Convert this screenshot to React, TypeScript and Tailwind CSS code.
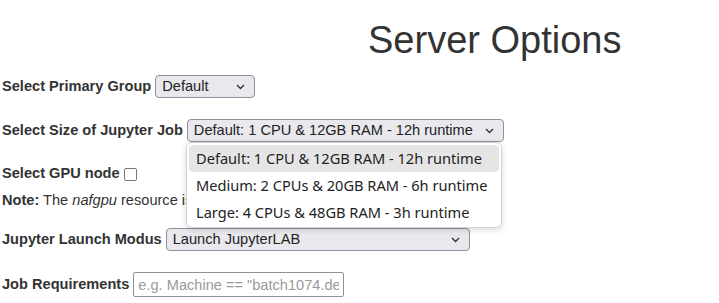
function Chevron() {
  return (
    <svg width="9" height="6" viewBox="0 0 9 6" className="shrink-0">
      <path d="M1 1 L4.5 4.5 L8 1" fill="none" stroke="#333" strokeWidth="1.4" />
    </svg>
  );
}

function FakeSelect({ value, width }: { value: string; width: string }) {
  return (
    <div
      className={`${width} h-[23px] flex items-center justify-between pl-[6px] pr-[9px] bg-[#e9e9ed] border border-[#8f8f9d] rounded-[4px] text-[14.6px] text-[#222]`}
    >
      <span className="whitespace-nowrap">{value}</span>
      <Chevron />
    </div>
  );
}

const options = [
  "Default: 1 CPU & 12GB RAM - 12h runtime",
  "Medium: 2 CPUs & 20GB RAM - 6h runtime",
  "Large: 4 CPUs & 48GB RAM - 3h runtime",
];

export default function App() {
  return (
    <div className="relative w-[719px] h-[303px] overflow-hidden bg-white text-[#333] font-['Liberation_Sans',Arial,sans-serif] text-[14.6px]">
      <h1 className="pl-[368px] pt-[18px] text-[38px] leading-[44px] font-normal">Server Options</h1>

      <form className="pl-[2px] flex flex-col">
        <div className="mt-[13px] flex items-center gap-[4px]">
          <label className="font-bold">Select Primary Group</label>
          <FakeSelect value="Default" width="w-[100px]" />
        </div>

        <div className="mt-[21px] flex items-center gap-[4px]">
          <label className="font-bold">Select Size of Jupyter Job</label>
          <FakeSelect value={options[0]} width="w-[317px]" />
        </div>

        <div className="mt-[22px] h-[20px] flex items-center gap-[4px]">
          <label className="font-bold">Select GPU node</label>
          <span className="w-[13px] h-[13px] border border-[#767676] rounded-[2px] bg-white" />
        </div>

        {/* the open dropdown hides the rest of this line */}
        <p className="mt-[6px] leading-[20px] w-[184px] overflow-hidden whitespace-nowrap">
          <b>Note:</b> The <i>nafgpu</i> resource is limited.
        </p>

        <div className="mt-[18px] flex items-center gap-[4px]">
          <label className="font-bold">Jupyter Launch Modus</label>
          <FakeSelect value="Launch JupyterLAB" width="w-[304px]" />
        </div>

        <div className="mt-[21px] flex items-center gap-[4px]">
          <label className="font-bold">Job Requirements</label>
          <input
            className="w-[211px] h-[25px] px-[4px] border border-[#8f8f9d] rounded-[2px] text-[14.6px] placeholder:text-[#9a9a9a] outline-none"
            placeholder='e.g. Machine == "batch1074.desy.de"'
          />
        </div>
      </form>

      <div className="absolute left-[186px] top-[142px] w-[316px] h-[86px] p-[2px] bg-white border border-[#d4d4d4] rounded-[6px] shadow-[0_2px_6px_rgba(0,0,0,0.15)] font-['Noto_Sans',sans-serif] text-[14.6px] text-[#222]">
        {options.map((o, i) => (
          <div
            key={o}
            className={`h-[27px] flex items-center pl-[7px] rounded-[4px] whitespace-nowrap ${i === 0 ? "bg-[#e5e5e5]" : ""}`}
          >
            {o}
          </div>
        ))}
      </div>
    </div>
  );
}
